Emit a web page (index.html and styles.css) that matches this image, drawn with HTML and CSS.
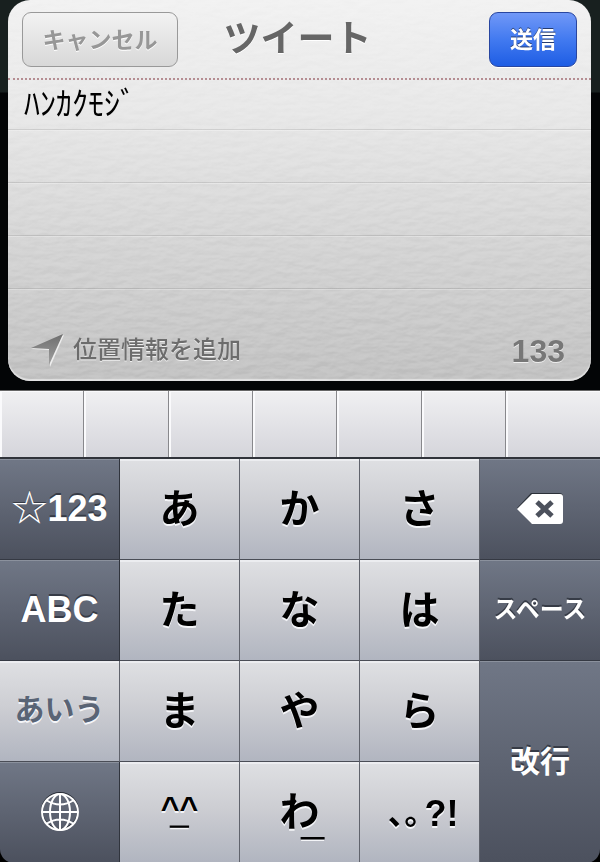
FILE: index.html
```html
<!DOCTYPE html>
<html lang="ja">
<head>
<meta charset="utf-8">
<meta name="viewport" content="width=device-width, initial-scale=1">
<title>ツイート</title>
<link rel="stylesheet" href="styles.css">
</head>
<body>
<main class="screen">
  <form class="card">
    <svg class="paper" aria-hidden="true">
      <filter id="grain" x="0" y="0" width="100%" height="100%" color-interpolation-filters="sRGB">
        <feTurbulence type="fractalNoise" baseFrequency="0.06 0.14" numOctaves="3" seed="4" result="noise"/>
        <feDiffuseLighting in="noise" lighting-color="#fff" surfaceScale="3">
          <feDistantLight azimuth="250" elevation="32"/>
        </feDiffuseLighting>
      </filter>
      <rect width="100%" height="100%" filter="url(#grain)"/>
    </svg>
    <header class="bar">
      <button class="btn cancel" type="button">キャンセル</button>
      <h1 class="title">ツイート</h1>
      <button class="btn send" type="submit">送信</button>
    </header>
    <textarea class="message" aria-label="ツイート" spellcheck="false">ﾊﾝｶｸﾓｼﾞ</textarea>
    <footer class="foot">
      <button class="location" type="button">
        <svg class="arrow" viewBox="0 0 34 34" aria-hidden="true">
          <defs><linearGradient id="steel" x1="0" y1="0" x2="0" y2="1"><stop offset="0" stop-color="#6e6e6e"/><stop offset="1" stop-color="#a0a0a0"/></linearGradient></defs>
          <path d="M33 2 19 34 18 17 0 16Z" fill="#eee"/>
          <path d="M32 1 18 32 18 16 0 15Z" fill="url(#steel)"/>
        </svg>
        <span class="label">位置情報を追加</span>
      </button>
      <output class="count">133</output>
    </footer>
  </form>

  <div class="candidates">
    <span></span><span></span><span></span><span></span><span></span><span></span><span></span>
  </div>

  <div class="keys">
    <button class="key dark latin"><span class="star">☆</span>123</button>
    <button class="key kana">あ</button>
    <button class="key kana">か</button>
    <button class="key kana">さ</button>
    <button class="key dark" aria-label="削除">
      <svg class="delete" viewBox="0 0 48 34" aria-hidden="true">
        <path d="M15 1H43Q47 1 47 4V27Q47 31 43 31H15L1 16Z" fill="#2b3038"/>
        <path d="M16 2H44Q47 2 47 5V29Q47 32 44 32H16L1 17Z" fill="#fff"/>
        <path d="M21 10 36 24M36 10 21 24" stroke="#4c515c" stroke-width="5"/>
      </svg>
    </button>

    <button class="key dark latin">ABC</button>
    <button class="key kana">た</button>
    <button class="key kana">な</button>
    <button class="key kana">は</button>
    <button class="key dark space">スペース</button>

    <button class="key mode">あいう</button>
    <button class="key kana">ま</button>
    <button class="key kana">や</button>
    <button class="key kana">ら</button>
    <button class="key dark enter">改行</button>

    <button class="key dark" aria-label="キーボード切替">
      <svg class="globe" viewBox="0 0 40 42" aria-hidden="true">
        <circle cx="20" cy="20" r="18" fill="none" stroke="#272c35" stroke-width="2"/>
        <g fill="none" stroke="#fff" stroke-width="2">
          <circle cx="20" cy="21" r="18"/>
          <ellipse cx="20" cy="21" rx="10" ry="18"/>
          <path d="M20 3V39M2 21H38M6 9Q20 18 34 9M6 33Q20 24 34 33"/>
        </g>
      </svg>
    </button>
    <button class="key face">^^<span class="stroke mouth">_</span></button>
    <button class="key kana">わ<span class="stroke under">_</span></button>
    <button class="key marks"><span class="stops">､｡</span>?!</button>
  </div>
</main>
</body>
</html>
```

FILE: styles.css
```css
* { box-sizing: border-box; }

body {
  margin: 0;
  background: #030506;
  font-family: "Liberation Sans", "Noto Sans CJK JP", sans-serif;
}

button {
  margin: 0;
  padding: 0;
  border: 0;
  font-family: "Noto Sans CJK JP", sans-serif;
}

.screen {
  background: linear-gradient(#18201f 0, #18201f 92px, #030506 93px, #030506 390px, #000 391px);
}

.card {
  position: relative;
  margin: 0 9px 9px 8px;
  overflow: hidden;
  border-radius: 22px;
  background: linear-gradient(#f2f2f2 0, #e8e8e8 30%, #d4d4d4 65%, #c2c2c2 100%);
  box-shadow: inset 0 -2px 1px #e2e2e2;
}

.paper {
  position: absolute;
  inset: 0;
  width: 100%;
  height: 100%;
  opacity: .1;
  mix-blend-mode: overlay;
  pointer-events: none;
}

.bar {
  position: relative;
  display: flex;
  align-items: center;
  justify-content: space-between;
  padding: 12px 14px 11px;
  border-bottom: 2px dotted #b58d92;
}

.btn {
  height: 55px;
  padding-bottom: 4px;
  border-radius: 9px;
  font-weight: 700;
}

.cancel {
  width: 156px;
  border: 1px solid #999;
  background: linear-gradient(#f2f2f2, #d8d8d8);
  color: #979797;
  font-size: 23px;
  text-shadow: 0 1px #fff;
}

.title {
  flex: 1;
  margin: 0;
  padding: 0 72px 8px 0;
  color: #666;
  font-family: "Noto Sans CJK JP", sans-serif;
  font-size: 37px;
  line-height: 46px;
  text-align: center;
  text-shadow: 0 1px #fff;
}

.send {
  width: 88px;
  border: 1px solid #2846a0;
  background: linear-gradient(#7198f7, #427af0 50%, #1e5de4);
  box-shadow: 0 1px #fff;
  color: #fff;
  font-size: 23px;
  text-shadow: 0 -1px #263c70;
}

.message {
  position: relative;
  display: block;
  width: 100%;
  height: 238px;
  padding: 0 16px;
  border: 0;
  outline: 0;
  resize: none;
  background: repeating-linear-gradient(transparent 0, transparent 49px, #0000001a 49px, #0000001a 50px, #fff4 50px, #fff4 51px, transparent 51px, transparent 53px);
  color: #000;
  font-family: "Noto Sans CJK JP", sans-serif;
  font-size: 32px;
  line-height: 42px;
}

.foot {
  position: relative;
  display: flex;
  align-items: center;
  justify-content: space-between;
  height: 63px;
  padding: 0 26px 0 23px;
  color: #777;
}

.location {
  display: flex;
  align-items: center;
  gap: 8px;
  background: none;
  color: #6c6c6c;
  font-size: 24px;
  font-weight: 500;
  text-shadow: 0 1px #eee;
}

.label { padding-bottom: 4px; }

.arrow {
  width: 34px;
  height: 34px;
}

.count {
  padding-top: 4px;
  font-size: 32px;
  font-weight: 700;
  text-shadow: 0 1px #eee;
}

.candidates {
  display: grid;
  grid-template-columns: repeat(6, 253fr) 282fr;
  height: 69px;
  border-top: 1px solid #666;
  border-bottom: 2px solid #30333a;
  background: linear-gradient(#f0f0f2, #d5d5db);
}

.candidates span {
  border-right: 1px solid #88888c;
  box-shadow: inset 2px 1px #fafafc;
}

.candidates span:last-child { border-right: 0; }

.keys {
  display: grid;
  grid-template-columns: repeat(5, 1fr);
  grid-auto-rows: 101px;
  overflow: hidden;
  border-radius: 0 0 14px 14px;
}

.key {
  position: relative;
  display: flex;
  align-items: center;
  justify-content: center;
  border-right: 1px solid #60636c;
  border-bottom: 1px solid #4a4d56;
  background: linear-gradient(#dfe0e3, #cdced3 45%, #b1b5c0);
  box-shadow: inset 0 2px #ecedf0;
  color: #000;
  font-weight: 700;
  text-shadow: 0 2px #f4f5f8;
}

.key:nth-child(5n) { border-right: 0; }

.dark {
  border-right-color: #30343d;
  border-bottom-color: #353943;
  background: linear-gradient(#707786, #5e6472 50%, #4c515e);
  box-shadow: inset 0 1px #8b919d;
  color: #fff;
  text-shadow: 0 -2px #363b46;
}

.kana {
  padding-bottom: 6px;
  font-size: 40px;
}

.latin {
  font-family: "Liberation Sans", sans-serif;
  font-size: 36px;
}

.star {
  padding-bottom: 8px;
  font-family: "Noto Sans CJK JP", sans-serif;
  font-weight: 400;
  text-shadow: 0 -1px #363b46;
}

.space {
  padding-bottom: 6px;
  font-size: 24px;
}

.mode {
  padding-bottom: 8px;
  color: #596475;
  font-size: 30px;
}

.enter {
  grid-column: 5;
  grid-row: 3 / span 2;
  padding-bottom: 6px;
  font-size: 30px;
}

.delete {
  width: 48px;
  height: 34px;
}

.globe {
  width: 40px;
  height: 42px;
}

.face {
  padding-bottom: 8px;
  font-family: "Liberation Sans", sans-serif;
  font-size: 32px;
}

.stroke {
  position: absolute;
  font-family: "Liberation Sans", sans-serif;
  line-height: 32px;
  -webkit-text-stroke: 1px #000;
}

.mouth {
  top: 34px;
  left: 50%;
  margin-left: -9px;
}

.under {
  top: 42px;
  left: 50%;
  margin-left: 2px;
}

.marks {
  padding: 4px 0 0 8px;
  font-family: "Liberation Sans", sans-serif;
  font-size: 36px;
}

.stops {
  padding: 0 4px 8px 0;
  font-family: "Noto Sans CJK JP", sans-serif;
  font-size: 32px;
}
```
